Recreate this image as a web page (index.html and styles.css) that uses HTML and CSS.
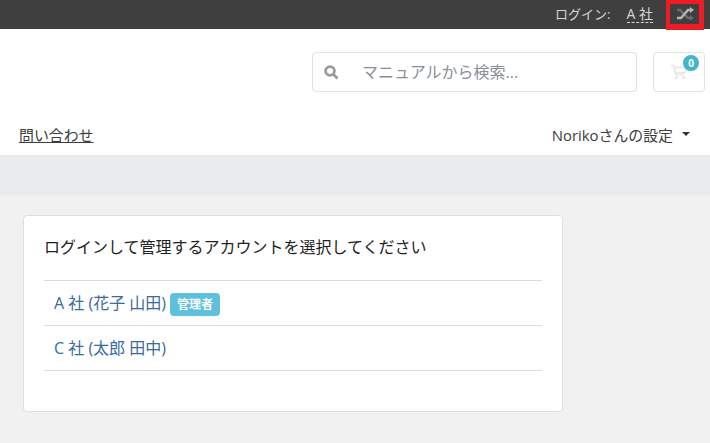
FILE: index.html
```html
<!DOCTYPE html>
<html lang="ja">
<head>
<meta charset="utf-8">
<title>アカウント選択</title>
<link rel="stylesheet" href="styles.css">
</head>
<body>
<div class="topbar">
  <span class="login-label">ログイン:</span>
  <span class="login-name">A 社</span>
  <a class="switch" href="#">
    <svg width="20" height="16" viewBox="0 0 20 16" aria-hidden="true">
      <path class="sw-back" d="M2 4h3l8 8h2" />
      <path class="sw-tail" d="M15 9l4 3-4 3z" />
      <path class="sw-front" d="M2 12h4l7-8h2" />
      <path class="sw-head" d="M15 1l4 3-4 3z" />
    </svg>
  </a>
</div>
<header class="header">
  <div class="search">
    <svg class="search-icon" width="15" height="15" viewBox="0 0 15 15" aria-hidden="true">
      <circle cx="6" cy="6" r="4.4" />
      <path d="M9.3 9.3l4.2 4.2" />
    </svg>
    <span class="search-text">マニュアルから検索...</span>
  </div>
  <div class="cart">
    <svg class="cart-icon" width="18" height="16" viewBox="0 0 18 16" aria-hidden="true">
      <path d="M1 1.5h2.6l2 9h9M4 3.5h12.5l-1.2 5H5.2" />
      <circle cx="6.6" cy="13.5" r="1.6" />
      <circle cx="13.8" cy="13.5" r="1.6" />
    </svg>
    <span class="cart-badge">0</span>
  </div>
</header>
<nav class="nav">
  <a class="nav-link" href="#">問い合わせ</a>
  <span class="nav-user">Norikoさんの設定<i class="caret"></i></span>
</nav>
<div class="band"></div>
<main class="main">
  <section class="card">
    <p class="card-title">ログインして管理するアカウントを選択してください</p>
    <ul class="list">
      <li class="item"><a href="#">A 社 (花子 山田)</a><span class="tag">管理者</span></li>
      <li class="item"><a href="#">C 社 (太郎 田中)</a></li>
    </ul>
  </section>
</main>
</body>
</html>
```
FILE: styles.css
```css
* { box-sizing: border-box; }
html, body { margin: 0; padding: 0; }
body {
  width: 710px;
  height: 443px;
  overflow: hidden;
  background: #f1f1f1;
  color: #3d3d3d;
  font-family: "Open Sans", "Noto Sans CJK JP", sans-serif;
  font-size: 14px;
}
a { color: inherit; }
.topbar {
  height: 29px;
  background: #3f3f3f;
  display: flex;
  justify-content: flex-end;
  align-items: center;
  padding-right: 6px;
  color: #d6d6d6;
  font-size: 13px;
}
.login-label { margin-right: 16px; padding-bottom: 2px; }
.login-name {
  border-bottom: 1px dashed #d6d6d6;
  font-size: 14px;
  line-height: 16px;
  margin-right: 13px;
}
.switch {
  width: 38px;
  height: 30px;
  align-self: flex-start;
  border-style: solid;
  border-color: #ee1c25;
  border-width: 4px 5px 6px 4px;
  display: flex;
  align-items: center;
  justify-content: center;
  position: relative;
  z-index: 1;
}
.switch svg { opacity: 0.75; }
.sw-back { fill: none; stroke: #777; stroke-width: 2.6; }
.sw-front { fill: none; stroke: #ddd; stroke-width: 2.4; }
.sw-head { fill: #ddd; }
.sw-tail { fill: #777; }
.header {
  height: 86px;
  background: #fff;
  display: flex;
  justify-content: flex-end;
  align-items: flex-start;
  gap: 16px;
  padding: 23px 5px 0 0;
}
.search {
  width: 325px;
  height: 40px;
  border: 1px solid #e0e0e0;
  border-radius: 4px;
  display: flex;
  align-items: center;
  padding-left: 12px;
  background: #fff;
}
.search-icon { margin: 1px 23px 0 -1px; fill: none; stroke: #9a9a9a; stroke-width: 2.8; }
.search-text { color: #8b9096; font-size: 16px; line-height: 22px; }
.cart {
  width: 52px;
  height: 40px;
  border: 1px solid #e3e3e3;
  border-radius: 4px;
  display: flex;
  align-items: center;
  padding-left: 16px;
  position: relative;
}
.cart-icon { fill: none; stroke: #e6e6e6; stroke-width: 1.6; }
.cart-icon circle { fill: #e6e6e6; stroke: none; }
.cart-badge {
  position: absolute;
  top: 2px;
  right: 5px;
  width: 16px;
  height: 16px;
  border-radius: 50%;
  background: #43b4c9;
  color: #fff;
  font-size: 10px;
  font-weight: 700;
  line-height: 16px;
  text-align: center;
}
.nav {
  height: 40px;
  background: #fff;
  display: flex;
  justify-content: space-between;
  align-items: center;
  padding: 0 20px 2px 19px;
  font-size: 14.9px;
}
.nav-user { display: flex; align-items: center; }
.caret {
  width: 0;
  height: 0;
  margin-left: 9px;
  border-top: 4.5px solid #333;
  border-left: 4.5px solid transparent;
  border-right: 4.5px solid transparent;
}
.band { height: 40px; background: #e9ecef; }
.main { padding: 20px 23px 0; }
.card {
  width: 540px;
  height: 197px;
  background: #fff;
  border: 1px solid #dfdfdf;
  border-radius: 4px;
  padding: 20px;
}
.card-title { margin: 0 0 20px; font-size: 16px; line-height: 24px; color: #222; position: relative; top: -1px; }
.list { list-style: none; margin: 0; padding: 0; border-top: 1px solid #dcdcdc; }
.item {
  height: 45px;
  border-bottom: 1px solid #dcdcdc;
  display: flex;
  align-items: center;
  padding-left: 10px;
  font-size: 16px;
  color: #3a6a9e;
}
.item a { text-decoration: none; padding-bottom: 2px; }
.tag {
  margin: 2px 0 0 4px;
  height: 23px;
  padding: 0 7px;
  border-radius: 4px;
  background: #5fc0de;
  color: #fff;
  font-size: 12px;
  font-weight: 700;
  line-height: 23px;
}
```
